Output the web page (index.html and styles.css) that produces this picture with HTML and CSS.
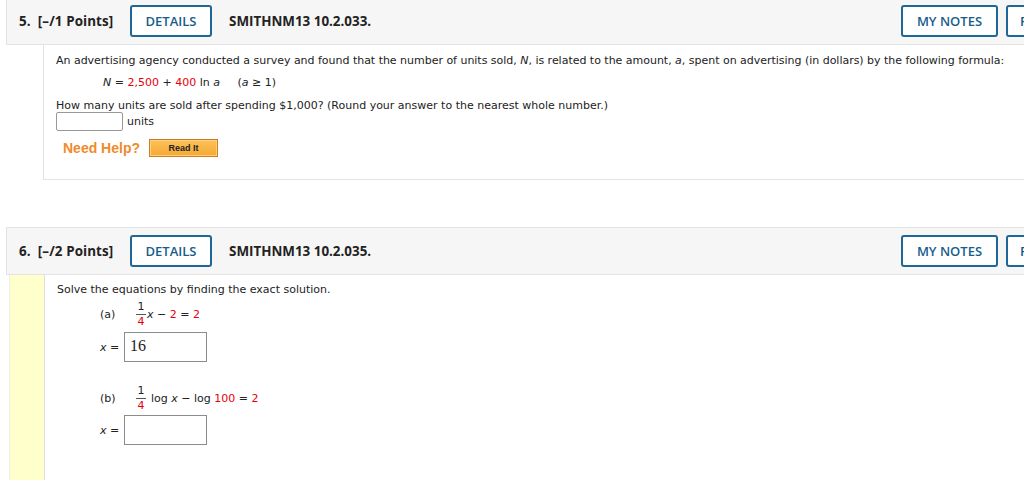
FILE: index.html
```html
<!DOCTYPE html>
<html>
<head>
<meta charset="utf-8">
<link rel="stylesheet" href="styles.css">
</head>
<body>
<div class="page">
  <section class="question q5">
    <div class="qhead">
      <span class="qnum">5.&nbsp; [–/1 Points]</span>
      <button class="btn details">DETAILS</button>
      <span class="qid">SMITHNM13 10.2.033.</span>
      <span class="spacer"></span>
      <button class="btn notes">MY NOTES</button>
      <button class="btn cut">P</button>
    </div>
    <div class="qbody plain">
      <div class="content">
        <p class="line1">An advertising agency conducted a survey and found that the number of units sold, <i>N</i>, is related to the amount, <i>a</i>, spent on advertising (in dollars) by the following formula:</p>
        <p class="formula"><i>N</i> = <span class="red">2,500</span> + <span class="red">400</span> ln <i>a</i> <span class="cond">(<i>a</i> ≥ 1)</span></p>
        <p class="ask">How many units are sold after spending $1,000? (Round your answer to the nearest whole number.)</p>
        <div class="answer"><span class="box small"></span><span>units</span></div>
        <div class="help"><span class="needhelp">Need Help?</span><button class="readit">Read It</button></div>
      </div>
    </div>
  </section>

  <section class="question q6">
    <div class="qhead">
      <span class="qnum">6.&nbsp; [–/2 Points]</span>
      <button class="btn details">DETAILS</button>
      <span class="qid">SMITHNM13 10.2.035.</span>
      <span class="spacer"></span>
      <button class="btn notes">MY NOTES</button>
      <button class="btn cut">P</button>
    </div>
    <div class="qbody yellow">
      <div class="strip"></div>
      <div class="content">
        <p class="solve">Solve the equations by finding the exact solution.</p>
        <div class="eq eq-a">
          <span class="lbl">(a)</span>
          <span class="frac"><span class="num">1</span><span class="den red">4</span></span><span><i>x</i> − <span class="red">2</span> = <span class="red">2</span></span>
        </div>
        <div class="ans ans-a"><span class="xeq"><i>x</i> =</span><span class="box big">16</span></div>
        <div class="eq eq-b">
          <span class="lbl">(b)</span>
          <span class="frac"><span class="num">1</span><span class="den red">4</span></span><span class="logs">log <i>x</i> − log <span class="red">100</span> = <span class="red">2</span></span>
        </div>
        <div class="ans ans-b"><span class="xeq"><i>x</i> =</span><span class="box big"></span></div>
      </div>
    </div>
  </section>
</div>
</body>
</html>
```
FILE: styles.css
```css
* { box-sizing: border-box; }
html, body { margin: 0; padding: 0; background: #fff; }
body { width: 1024px; height: 480px; overflow: hidden; }
.page { padding-left: 6px; }
p { margin: 0; }

.question { width: 1060px; }
.q5 { margin-top: -3px; }
.q6 { margin-top: 47px; }

.qhead {
  display: flex;
  align-items: center;
  height: 48px;
  background: #f6f6f6;
  border: 1px solid #e3e3e3;
  border-right: none;
  padding-left: 12px;
  font-family: "Open Sans", sans-serif;
  font-size: 13.4px;
  font-weight: 700;
  color: #222;
}
.q5 .qhead { border-top: none; }
.qnum { width: 111px; letter-spacing: 0.1px; }
.qid { margin-left: 17px; }
.spacer { flex: 1; }
.btn {
  height: 32px;
  background: #fff;
  border: 2px solid #1f6796;
  border-radius: 3px;
  color: #175d8c;
  font-family: "Open Sans", sans-serif;
  font-size: 13px;
  font-weight: 600;
  padding: 0 13px;
  cursor: pointer;
}
.details { width: 82px; padding: 0; }
.notes { width: 97px; padding: 0; margin-right: 3px; }
.cut { margin-left: 5px; width: 60px; text-align: left; padding-left: 12px; }

.qbody {
  display: flex;
  font-family: "DejaVu Sans", Verdana, sans-serif;
  font-size: 11px;
  color: #222;
}
.qbody.plain {
  margin-left: 37px;
  border-left: 1px solid #e3e3e3;
  border-bottom: 1px solid #e3e3e3;
  height: 135px;
}
.plain .content { padding: 8px 0 0 12px; }
.line1 { height: 16px; line-height: 16px; letter-spacing: -0.02px; }
.formula { margin: 6px 0 0 47px; line-height: 16px; }
.formula .cond { margin-left: 14px; }
.ask { margin-top: 7px; line-height: 16px; }
.answer { display: flex; align-items: center; gap: 4px; margin-top: -2px; }
.box { display: inline-block; border: 1px solid #8a8a8a; background: #fff; }
.box.small { width: 67px; height: 19px; border-radius: 2px; border-color: #999; }
.help { display: flex; align-items: center; margin: 8px 0 0 7px; }
.needhelp {
  font-family: "Liberation Sans", Arial, sans-serif;
  font-weight: 700;
  font-size: 14px;
  color: #f08a2c;
}
.readit {
  margin-left: 9px;
  width: 69px;
  height: 18px;
  padding: 0;
  background: linear-gradient(#fbc25a, #f6a933);
  border: 1px solid #d27a22;
  box-shadow: inset 0 0 0 1px #fcd07c;
  font-family: "Liberation Sans", Arial, sans-serif;
  font-size: 9px;
  font-weight: 700;
  color: #222;
  border-radius: 0;
}

.qbody.yellow { height: 210px; }
.strip {
  width: 36px;
  margin-left: 3px;
  background: #ffffcc;
  border-left: 1px solid #eeeeee;
  border-right: 1px solid #dddddd;
  flex-shrink: 0;
}
.yellow .content { padding: 8px 0 0 12px; }
.solve { line-height: 14px; }
.eq { display: flex; align-items: flex-start; margin: 11px 0 0 43px; line-height: 14px; height: 26px; }
.lbl { width: 36px; }
.frac {
  display: inline-flex;
  flex-direction: column;
  align-items: center;
  width: 10px;
  margin-top: -7px;
  line-height: 12px;
  margin-right: 1px;
}
.frac .num { border-bottom: 1px solid #555; width: 10px; text-align: center; padding-bottom: 1px; }
.frac .den { line-height: 13px; }
.logs { margin-left: 4px; }
.ans { display: flex; align-items: center; margin-left: 43px; }
.xeq { width: 24px; }
.box.big {
  width: 83px;
  height: 30px;
  border-color: #8c8c8c;
  font-family: "Liberation Serif", serif;
  font-size: 16px;
  padding: 4px 0 0 5px;
  color: #222;
}
.ans-a { margin-top: -2px; }
.eq-b { margin-top: 30px; }
.ans-b { margin-top: -3px; }
.red { color: #e8000b; }
i { font-style: italic; }
```
